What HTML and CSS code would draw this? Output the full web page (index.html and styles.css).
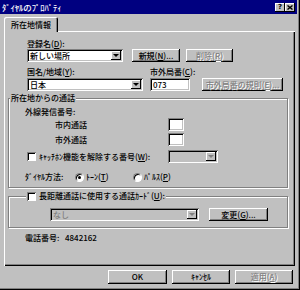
FILE: index.html
```html
<!DOCTYPE html>
<html>
<head>
  <meta charset="utf-8">
  <title>ﾀﾞｲﾔﾙのﾌﾟﾛﾊﾟﾃｨ</title>
  <link rel="stylesheet" href="styles.css">
</head>
<body>
  <div class="window">
    <div class="titlebar">
      <span class="title">ﾀﾞｲﾔﾙのﾌﾟﾛﾊﾟﾃｨ</span>
      <div class="caption-btns">
        <span class="cap-btn">?</span>
        <span class="cap-btn"><svg width="6" height="5" viewBox="0 0 6 5"><path d="M0.5 0.5L5.5 4.5M5.5 0.5L0.5 4.5" stroke="#000" stroke-width="1.4"/></svg></span>
      </div>
    </div>

    <div class="tabs"><div class="tab">所在地情報</div></div>

    <div class="panel">
      <div class="top">
        <div class="label">登録名(<u>D</u>):</div>
        <div class="row">
          <div class="combo name-combo"><span class="val">新しい場所</span><span class="arrow"></span></div>
          <button class="btn new-btn">新規(<u>N</u>)...</button>
          <button class="btn del-btn" disabled>削除(<u>R</u>)</button>
        </div>
        <div class="area-grid">
          <div class="label">国名/地域(<u>Y</u>):</div>
          <div class="label">市外局番(<u>C</u>):</div>
          <div></div>
          <div class="combo country-combo"><span class="val">日本</span><span class="arrow"></span></div>
          <div class="field code-field">073</div>
          <button class="btn rule-btn" disabled>市外局番の規則(<u>E</u>)...</button>
        </div>
      </div>

      <!-- 所在地からの通話 -->
      <div class="group local">
        <div class="group-title">所在地からの通話</div>
        <div class="label sub">外線発信番号:</div>
        <div class="prefix-row first"><span class="label">市内通話</span><span class="field small"></span></div>
        <div class="prefix-row"><span class="label">市外通話</span><span class="field small"></span></div>
        <div class="check-row">
          <div class="check-label"><span class="check"></span><span>ｷｬｯﾁﾎﾝ機能を解除する番号(<u>W</u>):</span></div>
          <div class="combo off wait-combo"><span class="val"></span><span class="arrow"></span></div>
        </div>
        <div class="dial-row">
          <span>ﾀﾞｲﾔﾙ方法:</span>
          <span class="opt"><span class="radio on"></span><span>ﾄｰﾝ(<u>T</u>)</span></span>
          <span class="opt"><span class="radio"></span><span>ﾊﾟﾙｽ(<u>P</u>)</span></span>
        </div>
      </div>

      <!-- 通話カード -->
      <div class="group card">
        <div class="group-title check-title"><span class="check"></span><span>長距離通話に使用する通話ｶｰﾄﾞ(<u>U</u>):</span></div>
        <div class="card-row">
          <div class="combo off card-combo"><span class="val">なし</span><span class="arrow"></span></div>
          <button class="btn change-btn">変更(<u>G</u>)...</button>
        </div>
      </div>

      <div class="phone"><span class="key">電話番号:</span><span class="num">4842162</span></div>
    </div>

    <div class="footer">
      <button class="btn ok-btn">OK</button>
      <button class="btn">ｷｬﾝｾﾙ</button>
      <button class="btn" disabled>適用(<u>A</u>)</button>
    </div>
  </div>
</body>
</html>
```

FILE: styles.css
```css
* {
  box-sizing: border-box;
}
body {
  margin: 0;
  font-family: "Noto Sans CJK JP", sans-serif;
  font-size: 8px;
  font-weight: 500;
  line-height: 10px;
  color: #000;
  background: #c0c0c0;
}
.window {
  width: 300px;
  height: 290px;
  background: #c0c0c0;
  box-shadow: inset -1px -1px #000, inset -2px -2px #808080;
}

/* title bar */
.titlebar {
  height: 14px;
  margin-right: 3px;
  padding: 0 2px;
  background: #000080;
  color: #fff;
  display: flex;
  align-items: center;
  justify-content: space-between;
  font-size: 8.5px;
}
.caption-btns {
  display: flex;
}
.cap-btn {
  width: 10px;
  height: 9px;
  background: #c0c0c0;
  box-shadow: inset -1px -1px #000, inset 1px 1px #fff;
  display: flex;
  align-items: center;
  justify-content: center;
  color: #000;
  font-family: "DejaVu Sans", sans-serif;
  font-weight: bold;
  font-size: 7px;
}

/* tab + panel */
.tabs {
  display: flex;
  margin: 3px 0 0 4px;
}
.tab {
  position: relative;
  z-index: 1;
  width: 54px;
  height: 15px;
  padding-top: 3px;
  background: #c0c0c0;
  border-radius: 2px 2px 0 0;
  box-shadow: inset 1px 1px #fff, inset -1px 0 #000, inset -2px 0 #808080;
  text-align: center;
}
.panel {
  width: 291px;
  height: 235px;
  margin: -1px 0 0 4px;
  padding: 8px 7px 0 4px;
  box-shadow: inset 1px 1px #fff, inset -1px -1px #000, inset -2px -2px #808080;
}
.top {
  padding-left: 19px;
}
.row {
  display: flex;
  height: 13px;
}

/* controls */
.combo {
  display: flex;
  align-items: center;
  height: 13px;
  padding: 2px;
  background: #fff;
  box-shadow: inset 1px 1px #808080, inset -1px -1px #fff, inset 2px 2px #000, inset -2px -2px #c0c0c0;
}
.combo .val {
  flex: 1;
  padding-left: 1px;
  line-height: 9px;
  white-space: nowrap;
  overflow: hidden;
}
.combo .arrow {
  width: 10px;
  height: 9px;
  background: #c0c0c0;
  box-shadow: inset -1px -1px #000, inset 1px 1px #fff;
  display: flex;
  align-items: center;
  justify-content: center;
}
.combo .arrow::after {
  content: "";
  border-top: 3px solid #000;
  border-left: 3px solid transparent;
  border-right: 3px solid transparent;
}
.combo.off {
  background: #c0c0c0;
}
.combo.off .val {
  color: #808080;
}
.combo.off .arrow::after {
  border-top-color: #808080;
}
.field {
  height: 13px;
  padding: 2px 0 0 3px;
  line-height: 9px;
  background: #fff;
  box-shadow: inset 1px 1px #808080, inset -1px -1px #fff, inset 2px 2px #000, inset -2px -2px #c0c0c0;
}
.field.small {
  width: 16px;
}
.btn {
  font: inherit;
  height: 13px;
  padding: 0;
  border: 0;
  background: #c0c0c0;
  color: #000;
  line-height: 11px;
  box-shadow: inset -1px -1px #000, inset 1px 1px #fff, inset -2px -2px #808080;
}
.btn:disabled {
  color: #808080;
  text-shadow: 1px 1px #fff;
}
.check {
  flex: none;
  width: 9px;
  height: 9px;
  background: #fff;
  box-shadow: inset 1px 1px #808080, inset -1px -1px #fff, inset 2px 2px #000;
}
.radio {
  flex: none;
  width: 9px;
  height: 9px;
  border-radius: 50%;
  background: #fff;
  border: 1px solid;
  border-color: #808080 #fff #fff #808080;
  box-shadow: inset 1px 1px #000;
  display: flex;
  align-items: center;
  justify-content: center;
}
.radio.on::after {
  content: "";
  width: 3px;
  height: 3px;
  border-radius: 50%;
  background: #000;
}

.name-combo {
  width: 96px;
}
.new-btn {
  width: 48px;
  margin-left: 9px;
}
.del-btn {
  width: 47px;
  margin-left: 6px;
}
.area-grid {
  display: grid;
  grid-template-columns: 123px 52px 81px;
  grid-template-rows: 10px 13px;
  row-gap: 1px;
  margin-top: 5px;
}
.country-combo {
  width: 116px;
}
.code-field {
  width: 40px;
}

/* group boxes */
.group {
  border: 1px solid #808080;
  box-shadow: 1px 1px #fff, inset 1px 1px #fff;
  padding: 0 0 5px 16px;
  margin-top: 7px;
}
.group-title {
  width: fit-content;
  margin: -6px 0 0 -15px;
  padding: 0 1px;
  background: #c0c0c0;
}
.sub {
  margin-top: 4px;
}
.prefix-row {
  display: grid;
  grid-template-columns: 143px 16px;
  align-items: center;
  height: 13px;
  margin-top: 2px;
}
.prefix-row.first {
  margin-top: 1px;
}
.prefix-row .label {
  padding-left: 30px;
}
.check-row {
  display: grid;
  grid-template-columns: 143px 50px;
  align-items: center;
  height: 13px;
  margin-top: 4px;
}
.check-label {
  display: flex;
  align-items: center;
  gap: 3px;
  padding-left: 2px;
}
.dial-row {
  display: grid;
  grid-template-columns: 50px 58px auto;
  align-items: center;
  margin-top: 9px;
}
.opt {
  display: flex;
  align-items: center;
  gap: 2px;
}

.card {
  margin-top: 8px;
  padding-bottom: 6px;
}
.check-title {
  display: flex;
  align-items: center;
  gap: 3px;
  margin-left: 1px;
}
.card-row {
  display: flex;
  height: 13px;
  margin: 7px 0 0 25px;
}
.card-combo {
  width: 149px;
}
.change-btn {
  width: 59px;
  margin-left: 10px;
}

.phone {
  display: flex;
  margin-top: 5px;
  padding-left: 17px;
}
.phone .key {
  width: 40px;
}

/* dialog buttons */
.footer {
  display: flex;
  justify-content: flex-end;
  gap: 5px;
  margin: 4px 7px 0 0;
}
.footer .btn {
  width: 58px;
  height: 14px;
  line-height: 12px;
}
.footer .ok-btn {
  width: 59px;
}
```
